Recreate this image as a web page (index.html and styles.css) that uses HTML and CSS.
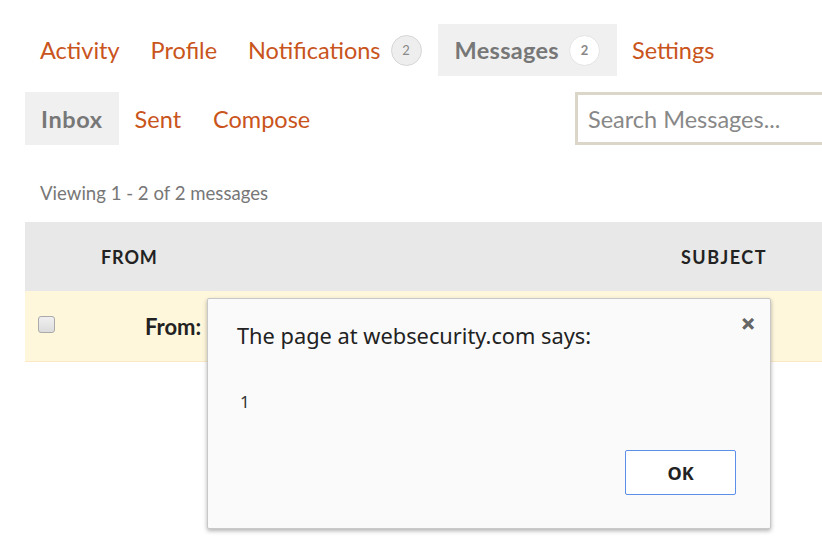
FILE: index.html
```html
<!DOCTYPE html>
<html>
<head>
<meta charset="utf-8">
<link rel="stylesheet" href="styles.css">
</head>
<body>
<div class="page">
  <nav class="main-nav">
    <a class="nav-link">Activity</a>
    <a class="nav-link">Profile</a>
    <a class="nav-link">Notifications <span class="badge">2</span></a>
    <a class="nav-link active">Messages <span class="badge badge-white">2</span></a>
    <a class="nav-link">Settings</a>
  </nav>
  <div class="sub-row">
    <nav class="sub-nav">
      <a class="sub-link active">Inbox</a>
      <a class="sub-link">Sent</a>
      <a class="sub-link">Compose</a>
    </nav>
    <input class="search" type="text" placeholder="Search Messages...">
  </div>
  <p class="viewing">Viewing 1 - 2 of 2 messages</p>
  <div class="table">
    <div class="thead">
      <span class="th th-from">FROM</span>
      <span class="th th-subject">SUBJECT</span>
    </div>
    <div class="row">
      <span class="checkbox"></span>
      <span class="from-label">From:</span>
    </div>
  </div>
</div>
<div class="dialog">
  <div class="dialog-title">The page at websecurity.com says:</div>
  <span class="dialog-close">&#x2715;</span>
  <div class="dialog-msg">1</div>
  <div class="dialog-actions">
    <button class="ok">OK</button>
  </div>
</div>
</body>
</html>
```
FILE: styles.css
```css
html, body {
  margin: 0;
  padding: 0;
  background: #fff;
  width: 822px;
  height: 550px;
  overflow: hidden;
}
body {
  font-family: Lato, "Open Sans", sans-serif;
  position: relative;
}
.page {
  padding: 24px 0 0 25px;
}
.main-nav {
  display: flex;
  align-items: stretch;
  height: 52px;
}
.nav-link {
  display: flex;
  align-items: center;
  padding: 0 16px 0 15px;
  color: #c9541c;
  font-size: 23.5px;
}
.nav-link.active {
  background: #f0f0f0;
  color: #777;
  font-weight: bold;
  padding: 0 17px;
  letter-spacing: 0.3px;
}
.badge {
  display: inline-flex;
  align-items: center;
  justify-content: center;
  width: 29px;
  height: 29px;
  border-radius: 50%;
  border: 1px solid #d6d6d6;
  background: #eee;
  color: #888;
  font-size: 13px;
  font-weight: normal;
  letter-spacing: 0;
  margin-left: 10px;
}
.badge-white {
  background: #fff;
  border-color: #e4e4e4;
  font-weight: bold;
}
.sub-row {
  display: flex;
  align-items: stretch;
  margin-top: 16px;
  height: 53px;
}
.sub-nav {
  display: flex;
  align-items: stretch;
  flex: 1;
}
.sub-link {
  display: flex;
  align-items: center;
  padding: 0 16px;
  color: #c9541c;
  font-size: 23.5px;
}
.sub-link.active {
  background: #f0f0f0;
  color: #777;
  font-weight: bold;
  letter-spacing: 0.6px;
}
.search {
  width: 260px;
  box-sizing: border-box;
  height: 53px;
  border: 3px solid #dbd6c8;
  padding: 0 10px;
  font-family: Lato, "Open Sans", sans-serif;
  font-size: 23.5px;
  margin-right: -13px;
}
.search::placeholder {
  color: #888;
}
.viewing {
  margin: 36px 0 0 15px;
  font-size: 18.6px;
  color: #777;
  height: 24px;
  line-height: 24px;
}
.table {
  margin-top: 17px;
}
.thead {
  display: flex;
  align-items: center;
  height: 69px;
  background: #e8e8e8;
}
.th {
  font-weight: bold;
  font-size: 18px;
  color: #222;
  letter-spacing: 0.9px;
}
.th-from {
  margin-left: 76px;
}
.th-subject {
  margin-left: auto;
  margin-right: 55px;
  letter-spacing: 1.5px;
}
.row {
  display: flex;
  align-items: center;
  height: 70px;
  background: #fef7dc;
  border-bottom: 1px solid #fbe8c4;
}
.checkbox {
  width: 15px;
  height: 15px;
  border: 1px solid #aaa;
  border-radius: 3px;
  background: linear-gradient(#f0f0f0, #dcdcdc);
  margin-left: 13px;
  margin-top: -4px;
}
.from-label {
  margin-left: 90px;
  font-weight: bold;
  font-size: 22px;
  color: #222;
}
.dialog {
  position: absolute;
  left: 207px;
  top: 298px;
  width: 562px;
  height: 229px;
  background: #fafafa;
  border: 1px solid #c8c8c8;
  border-radius: 2px;
  box-shadow: 0 2px 4px rgba(0,0,0,0.3);
  font-family: "Noto Sans", "Open Sans", sans-serif;
}
.dialog-title {
  margin: 22px 0 0 29px;
  font-size: 21.8px;
  color: #222;
}
.dialog-close {
  position: absolute;
  right: 15px;
  top: 13px;
  font-size: 17px;
  font-weight: bold;
  color: #666;
  -webkit-text-stroke: 0.6px #666;
}
.dialog-msg {
  margin: 40px 0 0 32px;
  font-size: 17px;
  color: #333;
}
.dialog-actions {
  display: flex;
  justify-content: flex-end;
  margin: 37px 34px 0 0;
}
.ok {
  width: 111px;
  height: 45px;
  background: #fff;
  border: 1px solid #5b8fe8;
  border-radius: 2px;
  font-family: "Noto Sans", "Open Sans", sans-serif;
  font-weight: bold;
  font-size: 18px;
  color: #222;
}
```
